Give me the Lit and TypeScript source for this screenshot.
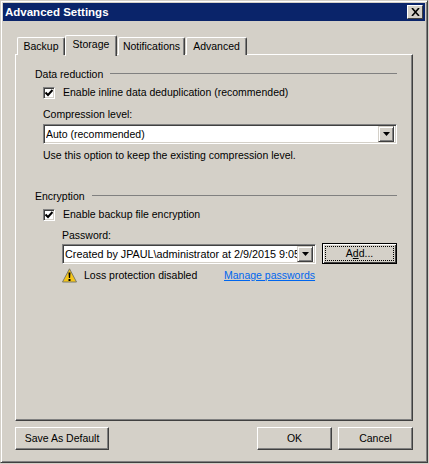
import { LitElement, html, css, svg } from "lit";
import { customElement } from "lit/decorators.js";

const arrow = svg`<svg width="7" height="4" viewBox="0 0 7 4"><path d="M0 0h7L3.5 4z" fill="#000"/></svg>`;

@customElement("app-root")
export class AppRoot extends LitElement {
  static styles = css`
    :host {
      display: block;
      width: 429px;
      height: 464px;
      overflow: hidden;
      background: #d4d0c8;
      font: 10.5px/13px "Liberation Sans", Arial, sans-serif;
      color: #000;
    }
    * { box-sizing: border-box; }
    .window {
      width: 428px;
      height: 463px;
      background: #d4d0c8;
      border: 1px solid;
      border-color: #d4d0c8 #404040 #404040 #d4d0c8;
      box-shadow: inset 1px 1px 0 #fff, inset -1px -1px 0 #808080;
      padding: 2px 0 0 2px;
      display: flex;
      flex-direction: column;
    }
    .title {
      height: 18px;
      flex: none;
      margin-right: 2px;
      background: #0a246a;
      color: #fff;
      font-weight: bold;
      font-size: 11.5px;
      display: flex;
      align-items: center;
      justify-content: space-between;
      padding: 0 2px;
    }
    .close {
      width: 16px;
      height: 14px;
      background: #d4d0c8;
      border: 1px solid;
      border-color: #fff #404040 #404040 #fff;
      display: flex;
      align-items: center;
      justify-content: center;
    }
    .body {
      padding: 14px 0 0 12px;
      flex: 1;
      display: flex;
      flex-direction: column;
    }
    .tabs {
      display: flex;
      align-items: flex-end;
      height: 20px;
      padding-left: 2px;
      position: relative;
      z-index: 1;
      margin-bottom: -1px;
    }
    .tab {
      height: 18px;
      border: 1px solid;
      border-color: #fff #404040 #d4d0c8 #fff;
      border-bottom: 0;
      border-radius: 2px 2px 0 0;
      box-shadow: inset -1px 0 0 #808080;
      display: flex;
      align-items: center;
      justify-content: center;
      padding-bottom: 1px;
      background: #d4d0c8;
    }
    .tab.backup { width: 48px; }
    .tab.notifications { width: 67px; margin-left: 1px; }
    .tab.advanced { width: 61px; margin-left: 1px; }
    .tab.active {
      height: 21px;
      width: 52px;
      margin: 0 0 -1px 0;
      position: relative;
      z-index: 2;
      padding-bottom: 4px;
    }
    .panel {
      width: 398px;
      height: 367px;
      border: 1px solid;
      border-color: #fff #404040 #404040 #fff;
      box-shadow: inset -1px -1px 0 #808080;
      padding: 13px 15px 0 19px;
      display: flex;
      flex-direction: column;
    }
    .group-head {
      display: flex;
      align-items: center;
      gap: 7px;
      height: 13px;
    }
    .group-head .line {
      flex: 1;
      background: #808080;
      height: 1px;
      margin-top: -3px;
    }
    .check-row {
      display: flex;
      align-items: center;
      gap: 8px;
      margin: 5px 0 0 8px;
      height: 13px;
    }
    .check {
      width: 12px;
      height: 12px;
      background: #fff;
      border: 1px solid;
      border-color: #808080 #fff #fff #808080;
      box-shadow: inset 1px 1px 0 #404040, inset -1px -1px 0 #d4d0c8;
      display: flex;
      align-items: center;
      justify-content: center;
    }
    .indent { margin-left: 8px; }
    .label { margin-top: 9px; }
    .combo {
      height: 20px;
      background: #fff;
      border: 1px solid;
      border-color: #808080 #fff #fff #808080;
      box-shadow: inset 1px 1px 0 #404040, inset -1px -1px 0 #d4d0c8;
      display: flex;
      align-items: center;
      justify-content: space-between;
      padding: 2px;
    }
    .combo .val {
      white-space: nowrap;
      overflow: hidden;
      flex: 1;
    }
    .combo .drop {
      width: 16px;
      height: 16px;
      flex: none;
      background: #d4d0c8;
      border: 1px solid;
      border-color: #d4d0c8 #404040 #404040 #d4d0c8;
      box-shadow: inset 1px 1px 0 #fff, inset -1px -1px 0 #808080;
      display: flex;
      align-items: center;
      justify-content: center;
    }
    .compress { width: 354px; margin: 3px 0 0 8px; }
    .hint { margin: 5px 0 0 8px; }
    .enc { margin-top: 28px; }
    .pw-label { margin: 8px 0 0 27px; }
    .pw-row {
      display: flex;
      gap: 6px;
      margin: 1px 0 0 27px;
      align-items: flex-start;
    }
    .pw { width: 254px; margin-top: 1px; }
    .pw .val { font-size: 10.8px; }
    .add {
      width: 75px;
      height: 21px;
      background: #d4d0c8;
      border: 1px solid #000;
      box-shadow: inset 1px 1px 0 #fff, inset -1px -1px 0 #404040;
      padding: 2px;
      display: flex;
    }
    .add span {
      flex: 1;
      border: 1px dotted #000;
      display: flex;
      align-items: center;
      justify-content: center;
    }
    .add u { text-underline-offset: 1px; }
    .status {
      display: flex;
      align-items: center;
      margin: 4px 0 0 27px;
      height: 15px;
    }
    .status svg { flex: none; margin-right: 7px; }
    .status .msg { width: 140px; }
    .status a { color: #0066ee; text-decoration: underline; }
    .footer {
      display: flex;
      width: 398px;
      margin-top: 6px;
    }
    .btn {
      height: 23px;
      background: #d4d0c8;
      border: 1px solid;
      border-color: #fff #404040 #404040 #fff;
      box-shadow: inset -1px -1px 0 #808080;
      display: flex;
      align-items: center;
      justify-content: center;
    }
    .save { width: 94px; margin-right: auto; }
    .ok { width: 75px; margin-right: 6px; }
    .cancel { width: 75px; }
  `;

  private checkMark() {
    return html`<span class="check"><svg width="8" height="8" viewBox="0 0 8 8"><path d="M0.5 3.5 L3 6 L7.5 1" fill="none" stroke="#000" stroke-width="2"/></svg></span>`;
  }

  render() {
    return html`
      <div class="window">
        <div class="title">
          <span>Advanced Settings</span>
          <span class="close"><svg width="9" height="8" viewBox="0 0 9 8"><path d="M1 0 L8 8 M8 0 L1 8" stroke="#000" stroke-width="1.6" fill="none"/></svg></span>
        </div>
        <div class="body">
          <div class="tabs">
            <div class="tab backup">Backup</div>
            <div class="tab active">Storage</div>
            <div class="tab notifications">Notifications</div>
            <div class="tab advanced">Advanced</div>
          </div>
          <div class="panel">
            <div class="group-head"><span>Data reduction</span><span class="line"></span></div>
            <div class="check-row">${this.checkMark()}<span>Enable inline data deduplication (recommended)</span></div>
            <div class="indent label">Compression level:</div>
            <div class="combo compress"><span class="val">Auto (recommended)</span><span class="drop">${arrow}</span></div>
            <div class="hint">Use this option to keep the existing compression level.</div>
            <div class="group-head enc"><span>Encryption</span><span class="line"></span></div>
            <div class="check-row">${this.checkMark()}<span>Enable backup file encryption</span></div>
            <div class="pw-label">Password:</div>
            <div class="pw-row">
              <div class="combo pw"><span class="val">Created by JPAUL\\administrator at 2/9/2015 9:05</span><span class="drop">${arrow}</span></div>
              <div class="add"><span>A<u>d</u>d...</span></div>
            </div>
            <div class="status">
              <svg width="15" height="15" viewBox="0 0 15 15">
                <path d="M7.5 0.8 L14.5 14 H0.5 Z" fill="#f5c518" stroke="#7a7a6a" stroke-width="1"/>
                <path d="M6.5 4.5h2l-.4 5.5h-1.2z M6.5 11h2v2h-2z" fill="#000"/>
              </svg>
              <span class="msg">Loss protection disabled</span>
              <a href="#">Manage passwords</a>
            </div>
          </div>
          <div class="footer">
            <div class="btn save">Save As Default</div>
            <div class="btn ok">OK</div>
            <div class="btn cancel">Cancel</div>
          </div>
        </div>
      </div>
    `;
  }
}
